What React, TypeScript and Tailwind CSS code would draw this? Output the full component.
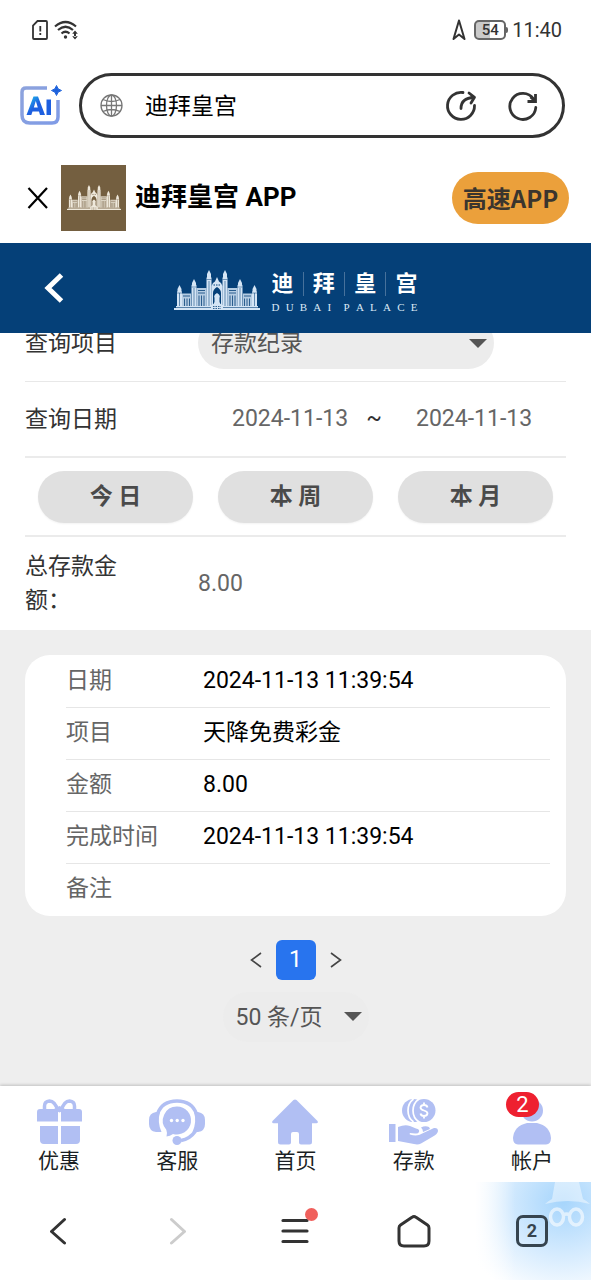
const records = [
  { label: "日期", value: "2024-11-13 11:39:54" },
  { label: "项目", value: "天降免费彩金" },
  { label: "金额", value: "8.00" },
  { label: "完成时间", value: "2024-11-13 11:39:54" },
  { label: "备注", value: "" },
];

const ranges = ["今 日", "本 周", "本 月"];

const Caret = ({ className }: { className: string }) => (
  <svg viewBox="0 0 18 9" className={`pointer-events-none absolute w-[18px] text-[#555] ${className}`} aria-hidden="true">
    <path d="M0 0h18L9 9z" fill="currentColor" />
  </svg>
);

const Palace = ({ className, wall }: { className: string; wall: string }) => (
  <svg viewBox="0 0 86 40" className={className} fill="currentColor" aria-hidden="true">
    <rect x="0" y="38" width="86" height="2" />
    <rect x="2" y="36" width="82" height="1.4" />
    {[false, true].map((flip) => (
      <g key={String(flip)} transform={flip ? "translate(86 0) scale(-1 1)" : undefined}>
        <path d="M3 36V22l.5-1v-2L5.500 15l2 4v2l.5 1v14z" />
        <path d="M8 23.500h9V36H8z" opacity=".85" />
        <path d="M17.500 36V15.500l.5-1V13l2-4 2 4v1.500l.5 1V36z" />
        <path d="M22.500 18h10v18h-10z" opacity=".85" />
        <path d="M32.500 36V8l.5-1V4l2-4 2 4v3l.5 1v28z" />
        <g stroke={wall} strokeWidth=".8" fill="none">
          <path d="M10.500 28.500V36M13 28.500V36M15.500 28.500V36M9 26h7" />
          <path d="M25 25.500V36M27.500 25.500V36M30 25.500V36M24 23h7M24 20.500h7" />
          <path d="M5.500 23v13M20 18v18M35 11v25" opacity=".7" />
          <path d="M32.500 9.500h5M17.500 17h5M3 23h5" opacity=".6" />
        </g>
      </g>
    ))}
    <path d="M37.500 36V16l1.500-3 2-1.500L43 7l2 4.500 2 1.500 1.500 3v20z" />
    <path d="M39 35V23q0-3.500 4-6 4 2.500 4 6v12l-1.500-3v-4q1-2-.5-3.500l-2-1.500-2 1.500q-1.500 1.500-.5 3.500v4z" fill={wall} />
    <path d="M39.500 15h7" stroke={wall} strokeWidth="1" strokeDasharray="1.500 1" />
    <path d="M37 40v-5l3-1 3-1 3 1 3 1v5z" />
    <path d="M39 36.500h8M39 38.500h8" stroke={wall} strokeWidth=".8" strokeDasharray="1.500 1" />
  </svg>
);

const GiftIcon = () => (
  <svg width="45" height="46" viewBox="0 0 45 46" fill="currentColor" aria-hidden="true">
    <path d="M3 10h18v12.500H0V13q0-3 3-3zM24 10h18q3 0 3 3v9.500H24zM3 27h18v18H7q-4 0-4-4zM24 27h19v14q0 4-4 4H24z" />
    <path
      d="M21 12Q18 2 12.500 2 7.500 2.500 7.500 7v4M24 12Q27 2 32.500 2q5 .5 5 5v4"
      fill="none"
      stroke="currentColor"
      strokeWidth="3.500"
    />
    <path d="M16 10.500 22.500 7 29 10.500l-6.500 3z" />
  </svg>
);

const ServiceIcon = () => (
  <svg width="56" height="46" viewBox="0 0 56 46" fill="currentColor" aria-hidden="true">
    <path d="M7 13h4q-3 10 1.500 20H7q-7-1-7-8v-4q0-7 7-8zM49 13h-4q3 10-1.500 20H49q7-1 7-8v-4q0-7-7-8z" />
    <path
      d="M8.500 15Q13 2 28 2t19.500 13M46.500 32Q41 40 32 41.500"
      fill="none"
      stroke="currentColor"
      strokeWidth="3.500"
    />
    <circle cx="28" cy="41.500" r="4.500" />
    <path d="M28 7.500a14 14 0 1 1-4 27.400Q21 37 17.500 37.500q1-4-.2-6.800A14 14 0 0 1 28 7.500z" />
    <g fill="white">
      <circle cx="22.500" cy="21.500" r="1.700" />
      <circle cx="28.200" cy="21.500" r="1.700" />
      <circle cx="34" cy="21.500" r="1.700" />
    </g>
  </svg>
);

const HomeIcon = () => (
  <svg width="46" height="46" viewBox="0 0 46 46" fill="currentColor" aria-hidden="true">
    <path d="M21.500 1q1.500-1.200 3 0L45.500 22q1 2-1 2.300H40V43q0 2.500-2.500 2.500H29q-2 0-2-2V35q0-2-2-2h-4q-2 0-2 2v8.500q0 2-2 2H8.500Q6 45.500 6 43V24.300H1.500q-2-.3-1-2.300z" />
  </svg>
);

const DepositIcon = () => (
  <svg width="50" height="46" viewBox="0 0 50 46" fill="currentColor" aria-hidden="true">
    <path d="M0 25h6.500v18H0zM9 28q7-3 12-1l6 2.500q4 .5 3 3.500-1 2-4 1.500l-5-.5q-1 1 0 1.500 5 1.500 9 .5L45 29q4-.5 4 3-.5 3-5 5.500l-12 7q-3 1.500-7 .5L9 42z" />
    <path d="M32 28.500q4-2 8-.5l1 2-7 3q0-3-2-4.500z" />
    <circle cx="24.500" cy="11.500" r="11.500" />
    <circle cx="35" cy="11.500" r="11.500" />
    <path d="M24.500 0q-5.500 4-5.500 11.500T24.500 23M30 0q-6 4-6 11.500T30 23" fill="none" stroke="white" strokeWidth="1.700" />
    <path
      d="M38.500 8.500Q38 6 35 6t-3.500 2.500q0 2 3.500 3t3.500 3Q38 17 35 17t-3.500-2.500M35 3.500V6M35 17v2.500"
      fill="none"
      stroke="white"
      strokeWidth="1.800"
    />
  </svg>
);

const AccountIcon = () => (
  <svg width="40" height="46" viewBox="0 0 40 46" fill="currentColor" aria-hidden="true">
    <circle cx="20" cy="11.500" r="11" />
    <path d="M15 24h10q13 3 14 15 0 6-5 6.500H6Q1 45 1 39 2 27 15 24z" />
  </svg>
);

const tabs = [
  { label: "优惠", icon: <GiftIcon /> },
  { label: "客服", icon: <ServiceIcon /> },
  { label: "首页", icon: <HomeIcon /> },
  { label: "存款", icon: <DepositIcon /> },
  { label: "帐户", icon: <AccountIcon />, badge: 2 },
];

const StatusBar = () => (
  <div className="flex h-15 items-center justify-between pr-[29px] pl-8 text-[#333]">
    <div className="flex items-center gap-1.5">
      <svg width="16" height="20" viewBox="0 0 16 20" fill="none" stroke="currentColor" strokeWidth="1.800" aria-hidden="true">
        <path d="M5.500 1H14q1 0 1 1v16q0 1-1 1H2q-1 0-1-1V5.500z" />
        <path d="M8.300 6v5.500M8.300 13v2" />
      </svg>
      <svg width="25" height="20" viewBox="0 0 25 20" fill="none" stroke="currentColor" strokeWidth="2.200" aria-hidden="true">
        <path d="M1 6.500Q11.500-2.500 22 6.500M4 10q7.500-6.500 15 0M7.500 13.500q4-3.500 8 0" />
        <circle cx="11.500" cy="17" r="1.700" fill="currentColor" stroke="none" />
        <path d="M21 10.500l2.800 3.200h-5.600zM21 19.500l2.800-3.200h-5.600zM20 13h2v4h-2z" fill="currentColor" stroke="none" />
      </svg>
    </div>
    <div className="flex items-center">
      <svg width="14" height="22" viewBox="0 0 14 22" fill="none" stroke="currentColor" strokeWidth="2" strokeLinejoin="round" aria-hidden="true">
        <path d="M7 1.500 1.500 20 7 15.500l5.500 4.500z" />
      </svg>
      <div className="ml-2 flex h-5 w-8 items-center justify-center rounded-[5px] border-2 border-[#666] bg-linear-to-r from-[#cacaca] from-50% to-white to-50% text-[15px] font-medium">
        54
      </div>
      <div className="mr-1 h-1.5 w-0.5 rounded-r bg-[#666]" />
      <span className="text-xl">11:40</span>
    </div>
  </div>
);

const AddressBar = () => (
  <div className="flex items-center gap-[17px] pt-[13px] pr-[26px] pb-3 pl-5">
    <button aria-label="AI" className="shrink-0">
      <svg width="42" height="42" viewBox="0 0 42 42" fill="none" aria-hidden="true">
        <defs>
          <linearGradient id="frame" x1="0" y1="0" x2="1" y2="1">
            <stop offset="0" stopColor="#8da3dd" />
            <stop offset="1" stopColor="#7f9be6" />
          </linearGradient>
          <linearGradient id="letters" x1="0" y1="0" x2="1" y2="1">
            <stop offset="0.200" stopColor="#1fa0e8" />
            <stop offset="0.500" stopColor="#1d5fe0" />
          </linearGradient>
        </defs>
        <path d="M27 3H6Q2 3 2 7v23q0 8 8 8h22q6 0 6-6V15" stroke="url(#frame)" strokeWidth="3.500" />
        <path d="M6.500 30 13.500 11.500h4.500L25 30h-5l-1-3.500h-6.500l-1.200 3.500zM13.800 22.500h4L15.800 16z" fill="url(#letters)" fillRule="evenodd" />
        <path d="M26.500 14.500H31V30h-4.500z" fill="#1d5fe0" />
        <path d="M36.500.5q.8 4.200 5 5-4.200.8-5 5-.8-4.200-5-5 4.200-.8 5-5z" fill="#1d62dc" stroke="#1d62dc" />
      </svg>
    </button>
    <div className="flex h-[65px] flex-1 items-center rounded-full border-3 border-[#333] pr-[23px] pl-[18px] text-[#333]">
      <svg width="23" height="23" viewBox="0 0 23 23" fill="none" stroke="#777" strokeWidth="1.300" aria-hidden="true">
        <circle cx="11.500" cy="11.500" r="10.500" />
        <ellipse cx="11.500" cy="11.500" rx="5" ry="10.500" />
        <path d="M11.500 1v21M1 11.500h21M3 5.500q8.500 4 17 0M3 17.500q8.500-4 17 0" />
      </svg>
      <input
        aria-label="地址"
        defaultValue="迪拜皇宫"
        className="ml-[22px] min-w-0 flex-1 pt-1 text-[23px] text-black outline-none"
      />
      <button aria-label="分享">
        <svg width="32" height="32" viewBox="0 0 32 32" fill="none" stroke="currentColor" strokeWidth="2.800" strokeLinecap="round" strokeLinejoin="round" aria-hidden="true">
          <path d="M18 2.500A13.500 13.500 0 1 0 29.500 15.500M16 18.500Q16 8 29 7.500M24 3l5.500 4.300L26 13" />
        </svg>
      </button>
      <button aria-label="刷新" className="ml-[30px]">
        <svg width="32" height="32" viewBox="0 0 32 32" fill="none" stroke="currentColor" strokeWidth="2.800" strokeLinecap="round" aria-hidden="true">
          <path d="M28.800 17.500A13 13 0 1 1 26.500 9" />
          <path d="M28.500 4v7.500h-8M27.500 10.500l-4-3.500" strokeLinecap="butt" />
        </svg>
      </button>
    </div>
  </div>
);

const AppBanner = () => (
  <div className="flex h-[93px] items-center pt-0.5 pr-[22px] pl-[27px]">
    <button aria-label="关闭">
      <svg width="22" height="22" viewBox="0 0 22 22" fill="none" stroke="black" strokeWidth="2.200" aria-hidden="true">
        <path d="m1.500 1 18.500 20M20 1 1.500 21" />
      </svg>
    </button>
    <div className="ml-3 flex h-[66px] w-[65px] items-center justify-center bg-[#745f40]">
      <Palace className="w-[54px] text-[#efe9dc]" wall="#745f40" />
    </div>
    <h1 className="ml-[9px] flex-1 text-[26px] font-bold text-black">迪拜皇宫 APP</h1>
    <button className="h-[52px] w-[117px] rounded-full bg-[#eba03b] font-[Noto_Sans_CJK_SC,sans-serif] text-2xl font-bold whitespace-nowrap text-[#3a352e]">
      高速APP
    </button>
  </div>
);

const SiteHeader = () => (
  <header className="grid h-[90px] grid-cols-[1fr_auto_1fr] items-center bg-[#054078] text-white">
    <button aria-label="返回" className="ml-11 justify-self-start">
      <svg width="20" height="30" viewBox="0 0 20 30" fill="none" stroke="currentColor" strokeWidth="5" aria-hidden="true">
        <path d="M17.500 2 4 15l13.500 13" />
      </svg>
    </button>
    <div className="flex items-center gap-3 pt-1">
      <Palace className="w-[86px] text-[#d5e5f5]" wall="#054078" />
      <div className="w-[146px] pt-1">
        <div className="flex h-[26px] items-center justify-between text-[22px] leading-none font-bold">
          <span>迪</span>
          <i className="h-6 w-px bg-[#47719b]" />
          <span>拜</span>
          <i className="h-6 w-px bg-[#47719b]" />
          <span>皇</span>
          <i className="h-6 w-px bg-[#47719b]" />
          <span>宫</span>
        </div>
        <div className="mt-1 flex justify-between font-[Liberation_Serif,serif] text-[11px] leading-3 text-[#dbe8f5]">
          {"DUBAI PALACE".split("").map((letter, i) => (
            <span key={i}>{letter}</span>
          ))}
        </div>
      </div>
    </div>
  </header>
);

const QueryForm = () => (
  <form className="bg-white px-[25px] text-[#333]">
    {/* first row is scrolled under the header */}
    <div className="-mt-4 flex h-[65px] items-start border-b border-[#e8e8e8]">
      <label htmlFor="item" className="w-[173px] leading-[54px]">
        查询项目
      </label>
      <div className="relative w-[296px]">
        <select
          id="item"
          className="h-[52px] w-full appearance-none rounded-full bg-[#ececec] pt-0.5 pl-[13px] text-[#555]"
        >
          <option>存款纪录</option>
        </select>
        <Caret className="top-[22px] right-[7px]" />
      </div>
    </div>
    <div className="flex h-[76px] items-center border-b-2 border-[#ebebeb] pt-0.5">
      <label htmlFor="from" className="w-[207px]">
        查询日期
      </label>
      <div className="flex items-center pb-0.5 text-[#666]">
        <input id="from" defaultValue="2024-11-13" className="w-[118px] outline-none" />
        <span className="w-[48px] text-center text-[#333]">~</span>
        <input aria-label="结束日期" defaultValue="2024-11-13" className="ml-[18px] w-[118px] outline-none" />
      </div>
    </div>
    <div className="grid grid-cols-3 gap-[25px] border-b-2 border-[#ebebeb] px-[13px] pt-[13px] pb-3">
      {ranges.map((range) => (
        <button
          key={range}
          type="button"
          className="h-[52px] rounded-full bg-[#e0e0e0] font-bold text-[#4a4a4a] shadow-xs"
        >
          {range}
        </button>
      ))}
    </div>
    <div className="flex h-[93px] items-center">
      <span className="mr-[73px] w-[100px] leading-[34px]">总存款金额：</span>
      <output className="text-[#666]">8.00</output>
    </div>
  </form>
);

const Results = () => (
  <section className="flex-1 bg-[#eee] px-[25px] pt-[25px]">
    <div className="rounded-[25px] bg-white pr-4 pb-px pl-[41px]">
      <table className="w-full">
        <tbody>
          {records.map((record) => (
            <tr key={record.label} className="h-[52px] border-b border-[#e6e6e6] last:border-0">
              <th scope="row" className="w-[137px] text-left font-normal text-[#666]">
                {record.label}
              </th>
              <td className="text-black">{record.value}</td>
            </tr>
          ))}
        </tbody>
      </table>
    </div>
    <nav aria-label="分页" className="mt-6 flex items-center justify-center gap-[13px] text-[#444]">
      <button aria-label="上一页" className="flex w-[14px] justify-center">
        <svg width="12" height="16" viewBox="0 0 12 16" fill="none" stroke="currentColor" strokeWidth="1.600" aria-hidden="true">
          <path d="M11 1 1.500 8 11 15" />
        </svg>
      </button>
      <button className="size-10 rounded-md bg-[#2874ee] text-white">1</button>
      <button aria-label="下一页" className="flex w-[14px] justify-center">
        <svg width="12" height="16" viewBox="0 0 12 16" fill="none" stroke="currentColor" strokeWidth="1.600" aria-hidden="true">
          <path d="m1 1 9.500 7L1 15" />
        </svg>
      </button>
    </nav>
    <div className="relative mx-auto mt-3 w-[146px]">
      <select aria-label="每页条数" className="h-[50px] w-full appearance-none rounded-full bg-[#ececec] pt-0.5 pl-[13px] text-[#555]">
        <option>50 条/页</option>
      </select>
      <Caret className="top-5 right-[7px]" />
    </div>
  </section>
);

const TabBar = () => (
  <nav className="grid h-24 grid-cols-5 bg-white shadow-[0_-1px_3px_rgba(0,0,0,0.2)]">
    {tabs.map((tab) => (
      <a key={tab.label} href="#" className="flex flex-col items-center pt-[13px] text-[21px] leading-8 text-[#1b1f24]">
        <span className="relative text-[#b1bff3]">
          {tab.icon}
          {tab.badge && (
            <span className="absolute -top-[7px] right-[13px] h-[25px] w-[33px] rounded-full bg-[#ee2030] text-center text-[22px] leading-[25px] text-white">
              {tab.badge}
            </span>
          )}
        </span>
        {tab.label}
      </a>
    ))}
  </nav>
);

const BrowserBar = () => (
  <nav className="relative grid h-[98px] grid-cols-5 place-items-center bg-white text-[#333]">
    <div className="absolute inset-y-0 right-0 w-[116px] overflow-hidden bg-[radial-gradient(110px_100px_at_88px_20px,#a6d5fc_0%,#d3eafe_50%,#ffffff_100%)]">
      <svg width="48" height="48" viewBox="0 0 48 48" className="absolute top-0 right-0" fill="none" aria-hidden="true">
        <path d="M12 0h24l4 17q4 2 7 5-22-6-45 0 3-3 7-5z" fill="white" opacity=".45" />
        <g stroke="white" strokeWidth="3.500" opacity=".6">
          <ellipse cx="14" cy="35" rx="6.500" ry="8" />
          <ellipse cx="33" cy="35" rx="6.500" ry="8" />
          <path d="M20 33q3.500-2 7 0" />
        </g>
      </svg>
      <div className="absolute inset-y-0 left-0 w-10 bg-linear-to-r from-white to-transparent" />
    </div>
    <button aria-label="后退">
      <svg width="18" height="28" viewBox="0 0 18 28" fill="none" stroke="currentColor" strokeWidth="3" strokeLinecap="round" strokeLinejoin="round" aria-hidden="true">
        <path d="M14.500 2.500 1.500 14.500l13 11.500" />
      </svg>
    </button>
    <button aria-label="前进" disabled className="text-[#ccc]">
      <svg width="18" height="28" viewBox="0 0 18 28" fill="none" stroke="currentColor" strokeWidth="3" strokeLinecap="round" strokeLinejoin="round" aria-hidden="true">
        <path d="m3.500 2.500 13 12-13 11.500" />
      </svg>
    </button>
    <button aria-label="菜单" className="relative">
      <svg width="28" height="28" viewBox="0 0 28 28" stroke="currentColor" strokeWidth="3.200" strokeLinecap="round" aria-hidden="true">
        <path d="M2 3.500h24M2 14h24M2 24.500h24" />
      </svg>
      <span className="absolute -top-[9px] -right-[9px] size-[13px] rounded-full bg-[#f0605c]" />
    </button>
    <button aria-label="主页">
      <svg width="34" height="34" viewBox="0 0 34 34" fill="none" stroke="currentColor" strokeWidth="3" strokeLinejoin="round" aria-hidden="true">
        <path d="M17 2.500q1 0 2 .800L30.500 11q1.500 1 1.500 3v13q0 5-5 5H7q-5 0-5-5V14q0-2 1.500-3L15 3.300q1-.8 2-.8z" />
      </svg>
    </button>
    <button aria-label="窗口" className="relative size-8 rounded-[7px] border-3 border-[#36444f] text-lg leading-[26px] font-bold text-[#36444f]">
      2
    </button>
  </nav>
);

const App = () => {
  return (
    <div className="flex min-h-screen flex-col bg-white font-[Roboto,Noto_Sans_CJK_SC,sans-serif]">
      <StatusBar />
      <AddressBar />
      <AppBanner />
      <SiteHeader />
      <main className="flex flex-1 flex-col overflow-hidden text-[23px] leading-[34px]">
        <QueryForm />
        <Results />
      </main>
      <TabBar />
      <BrowserBar />
    </div>
  );
};

export default App;
